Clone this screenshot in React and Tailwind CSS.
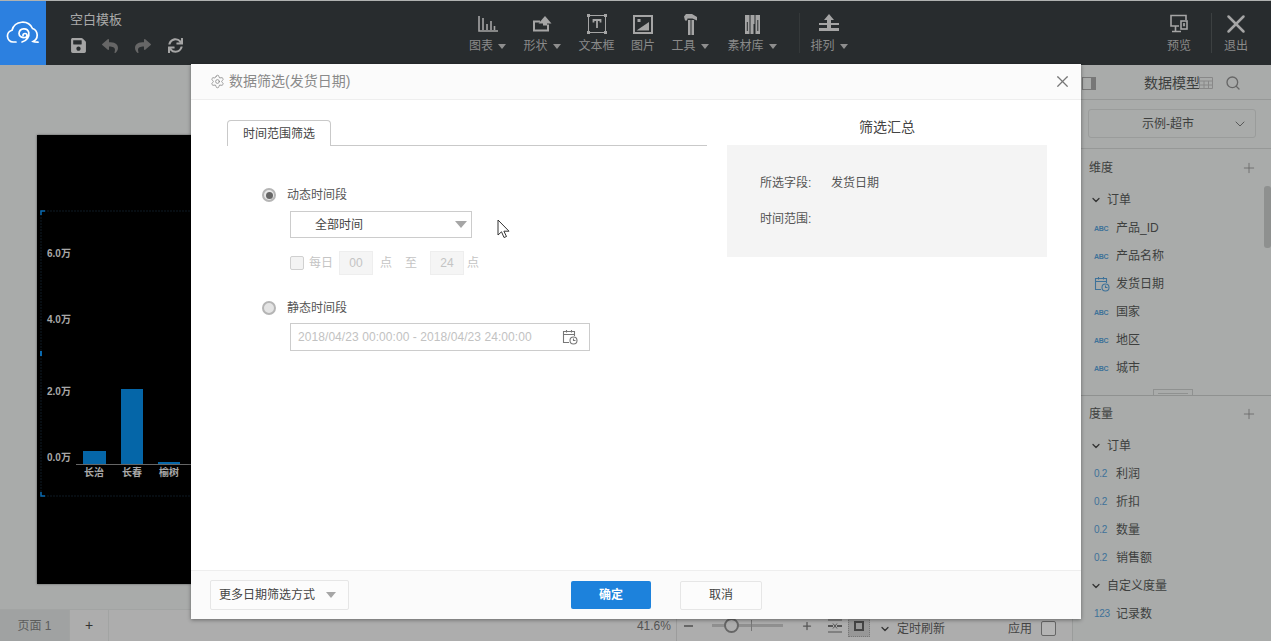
import React from "react";
import { FaSave, FaReply, FaShare, FaSync } from "react-icons/fa";
import { ChevronDown, Plus, Search, Settings, X } from "lucide-react";

const Caret = ({ className = "border-t-[#8e8e8e]" }) => (
  <span className={`inline-block w-0 h-0 border-x-[4px] border-x-transparent border-t-[5px] ${className}`}></span>
);

const ChartIcon = () => (
  <svg width="20" height="16" viewBox="0 0 20 16" fill="none" stroke="#a5a5a5" strokeWidth="1.600">
    <path d="M1 0v15h19M5 2v12M9 8v6M13 5v9M16.500 10v4" />
  </svg>
);
const ShapeIcon = () => (
  <svg width="19" height="16" viewBox="0 0 19 16" fill="none">
    <path d="M7 5.500H1v9h14v-6" stroke="#a5a5a5" strokeWidth="2" />
    <path d="M12 0l6.500 7.500h-13z" fill="#a5a5a5" />
    <rect x="10" y="7" width="4" height="2.500" fill="#a5a5a5" />
  </svg>
);
const TextBoxIcon = () => (
  <svg width="20" height="20" viewBox="0 0 20 20" fill="none">
    <rect x="1.500" y="1.500" width="17" height="17" stroke="#a5a5a5" strokeWidth="1" />
    <path d="M0 0h3v3H0zM17 0h3v3h-3zM0 17h3v3H0zM17 17h3v3h-3z" fill="#a5a5a5" />
    <path d="M6.500 8.500V6h7v2.500M10 6v8" stroke="#a5a5a5" strokeWidth="1.800" />
  </svg>
);
const PictureIcon = () => (
  <svg width="20" height="19" viewBox="0 0 20 19" fill="none">
    <rect x="1" y="1" width="18" height="17" stroke="#a5a5a5" strokeWidth="2" />
    <path d="M3.500 15.500L16 7v8.500z" fill="#a5a5a5" />
    <rect x="4.500" y="4" width="3" height="3" fill="#a5a5a5" />
  </svg>
);
const HammerIcon = () => (
  <svg width="13" height="21" viewBox="0 0 13 21" fill="#a5a5a5">
    <path d="M0 2.500L2 0h6l5 3v3.500L8.500 4.500H3.500L3 6.500H1z" />
    <path d="M4 6h2.500v15H4zM7.500 6H10v15H7.500z" />
  </svg>
);
const LibraryIcon = () => (
  <svg width="15" height="19" viewBox="0 0 15 19" fill="#a5a5a5">
    <path d="M0 0h4.500v19H0zM5.500 0h4v9H8.500v10h-3zM10.500 0H15v19h-4.500z" />
    <path d="M1.800 7h1v9h-1zM12.300 5h1v11h-1z" fill="#282c2e" />
  </svg>
);
const SortIcon = () => (
  <svg width="22" height="20" viewBox="0 0 22 20" fill="#a5a5a5">
    <path d="M11 0l5 6h-3v3h8v2h-8v3h8v3H1v-3h8v-3H1V9h8V6H6z" />
  </svg>
);
const PreviewIcon = () => (
  <svg width="20" height="20" viewBox="0 0 20 20" fill="none" stroke="#a5a5a5" strokeWidth="1.600">
    <path d="M10 12H2V1.500h15V6M6.500 12v5M3 17.500h9" />
    <rect x="12" y="7" width="6" height="8" />
    <rect x="14.200" y="9.500" width="1.600" height="2.500" fill="#a5a5a5" strokeWidth="0.500" />
  </svg>
);
const CloudLogo = () => (
  <svg width="34" height="24" viewBox="0 0 34 24" fill="none" stroke="#fff" strokeWidth="1.700" strokeLinecap="round">
    <path d="M10 21H7a6 6 0 0 1-1-11.800A11 11 0 0 1 26.500 7.500 7 7 0 0 1 27 20.500c1 .6 2 .7 5 .7" />
    <path d="M17 14.500a2 2 0 1 1 2 2c-3 .5-6-1-6-4a5 5 0 0 1 9.800-1c.8 4-1.800 8-6.800 9.500" />
  </svg>
);
const CalendarClock = ({ color = "#777" }) => (
  <svg width="16" height="16" viewBox="0 0 16 16" fill="none" stroke={color} strokeWidth="1.100">
    <path d="M7 13.500H1.500v-11h11V7M1.500 5.500h11M4.500 1v2.500M9.500 1v2.500" />
    <circle cx="11.500" cy="11.500" r="3.500" fill="none" />
    <path d="M11.500 9.500v2h2" />
  </svg>
);
const Cursor = () => (
  <svg width="14" height="20" viewBox="0 0 14 20" fill="#fff" stroke="#333" strokeWidth="1">
    <path d="M1 1v15l3.500-3.200L7 18.500l2.500-1-2.600-5.300H12z" />
  </svg>
);

const ToolItem = ({ width, icon, label, caret }) => (
  <div className={`flex flex-col items-center ${width}`}>
    <div className="h-[26px] flex items-center justify-center mt-[10px]">{icon}</div>
    <div className="flex items-center gap-[5px] h-[18px] text-[12px] text-[#8a8a8a] leading-none">
      {label}
      {caret && <Caret />}
    </div>
  </div>
);

const FieldRow = ({ type, label }) => (
  <div className="flex items-center h-[28px] pl-[21px]">
    <span className="w-[22px] flex items-center">
      {type === "date" && <CalendarClock color="#3e7299" />}
      {type === "ABC" && <span className="text-[7px] font-bold tracking-[-0.3px] text-[#3e7299] leading-none">ABC</span>}
      {type !== "date" && type !== "ABC" && <span className="text-[10px] tracking-[-0.3px] text-[#3e7299] leading-none">{type}</span>}
    </span>
    <span className="text-[12px] text-[#3d3f3e] leading-none">{label}</span>
  </div>
);

const GroupRow = ({ label }) => (
  <div className="flex items-center h-[28px] pl-[17px] gap-[5px] text-[12px] text-[#3d3f3e] leading-none">
    <ChevronDown size={12} strokeWidth={2.500} color="#333" />
    {label}
  </div>
);

const SectionHeader = ({ label, height }) => (
  <div className={`flex items-center justify-between pl-[16px] pr-[14px] text-[12px] text-[#3d3f3e] ${height}`}>
    {label}
    <Plus size={16} strokeWidth={1.200} color="#666" />
  </div>
);

const CanvasChart = () => (
  <svg width="900" height="449" viewBox="0 0 900 449" className="block">
    <path d="M4 76H900M4 361H900M4 76V361" stroke="#0f1a24" strokeWidth="1" strokeDasharray="2 1" />
    <path d="M4 80V76H8M4 357V361H8" stroke="#0a6ab0" strokeWidth="1.500" fill="none" />
    <rect x="3" y="216" width="2" height="5" fill="#0a6ab0" />
    <g fill="#a8a8a8" fontSize="10" fontWeight="700">
      <text x="10" y="122">6.0万</text>
      <text x="10" y="188">4.0万</text>
      <text x="10" y="260">2.0万</text>
      <text x="10" y="326">0.0万</text>
    </g>
    <rect x="46" y="316" width="23" height="13" fill="#0566a8" />
    <rect x="84" y="254" width="22" height="75" fill="#0566a8" />
    <rect x="121" y="327" width="22" height="2" fill="#0566a8" />
    <path d="M39 329.500H160" stroke="#666" strokeWidth="1" />
    <g fill="#a8a8a8" fontSize="10" fontWeight="700" textAnchor="middle">
      <text x="57" y="341">长治</text>
      <text x="95" y="341">长春</text>
      <text x="132" y="341">榆树</text>
    </g>
  </svg>
);

export default function App() {
  return (
    <div className="relative w-[1271px] h-[641px] overflow-hidden flex flex-col bg-[#a9abaa] font-['Liberation_Sans','Noto_Sans_CJK_SC',sans-serif]">
      {/* top bar */}
      <header className="flex h-[65px] shrink-0 bg-[#282c2e] border-t border-[#b0b2b1]">
        <div className="w-[46px] bg-[#2c80e0] flex items-center justify-center">
          <CloudLogo />
        </div>
        <div className="w-[414px] pl-[24px] pt-[10px]">
          <div className="text-[13px] leading-[18px] text-[#a9a9a9]">空白模板</div>
          <div className="flex items-center mt-[8px]">
            <FaSave size={17} color="#a5a5a5" />
            <FaReply size={16} color="#666" className="ml-[15px]" />
            <FaShare size={16} color="#666" className="ml-[17px]" />
            <FaSync size={15} color="#a5a5a5" className="ml-[17px]" />
          </div>
        </div>
        <ToolItem width="w-[55px]" icon={<ChartIcon />} label="图表" caret />
        <ToolItem width="w-[54px]" icon={<ShapeIcon />} label="形状" caret />
        <ToolItem width="w-[55px]" icon={<TextBoxIcon />} label="文本框" />
        <ToolItem width="w-[38px]" icon={<PictureIcon />} label="图片" />
        <ToolItem width="w-[56px]" icon={<HammerIcon />} label="工具" caret />
        <ToolItem width="w-[68px]" icon={<LibraryIcon />} label="素材库" caret />
        <div className="w-px h-[40px] mt-[12px] ml-[13px] bg-[#343839]"></div>
        <div className="ml-[3px]">
          <ToolItem width="w-[52px]" icon={<SortIcon />} label="排列" caret />
        </div>
        <div className="ml-auto flex pr-[15px]">
          <ToolItem width="w-[40px]" icon={<PreviewIcon />} label="预览" />
          <div className="w-px h-[40px] mt-[12px] ml-[12px] mr-[4px] bg-[#3c4041]"></div>
          <ToolItem width="w-[40px]" icon={<X size={30} strokeWidth={2} color="#a5a5a5" />} label="退出" />
        </div>
      </header>

      <div className="flex flex-1 min-h-0">
        {/* canvas */}
        <main className="w-[1072px] flex flex-col">
          <div className="flex-1 min-h-0 overflow-hidden pl-[37px] pt-[70px]">
            <div className="w-[900px] h-[449px] bg-black shadow-[0_0_2px_#555]">
              <CanvasChart />
            </div>
          </div>
          <footer className="h-[32px] shrink-0 flex items-center bg-[#adadad] border-t border-[#a2a4a3] text-[12px] text-[#555]">
            <div className="w-[69px] h-full flex items-center justify-center bg-[#a0a2a2] text-[#5c5c5c]">页面 1</div>
            <div className="w-[40px] h-full flex items-center justify-center border-x border-[#a2a4a3] text-[14px] text-[#333]">+</div>
            <div className="ml-auto flex items-center h-full pr-[16px]">
              <span className="text-[#555]">41.6%</span>
              <div className="w-px h-full bg-[#9c9c9c] ml-[5px]"></div>
              <div className="w-[9px] h-[2px] bg-[#666] ml-[7px]"></div>
              <div className="relative w-[71px] h-[3px] bg-[#8f8f8f] ml-[19px]">
                <span className="absolute left-[12px] top-[-6px] w-[15px] h-[15px] rounded-full border-2 border-[#666] bg-[#adadad]"></span>
                <span className="absolute left-[39px] top-[-4px] w-px h-[11px] bg-[#777]"></span>
              </div>
              <Plus size={12} strokeWidth={2.500} color="#555" className="ml-[18px]" />
              <svg width="14" height="14" viewBox="0 0 14 14" fill="none" stroke="#555" strokeWidth="1.200" className="ml-[15px]">
                <path d="M0 1h14M0 13h14" />
                <path d="M0 7h5M9 7h5" strokeWidth="2" />
                <path d="M5 4.500L7 7 5 9.500M9 4.500L7 7l2 2.500" strokeWidth="1" />
              </svg>
              <div className="w-[22px] h-[22px] ml-[6px] bg-[#979797] border border-dotted border-[#777] flex items-center justify-center">
                <div className="w-[10px] h-[10px] border-2 border-[#444]"></div>
              </div>
              <ChevronDown size={12} strokeWidth={2.500} color="#333" className="ml-[9px] mt-[6px]" />
              <span className="ml-[6px] mt-[6px] text-[#444]">定时刷新</span>
              <span className="ml-[63px] mt-[6px] text-[#444]">应用</span>
              <div className="w-[15px] h-[15px] ml-[9px] mt-[6px] rounded-[2px] border border-[#666] bg-[#b4b4b4]"></div>
            </div>
          </footer>
        </main>

        {/* data model panel */}
        <aside className="relative flex-1 min-w-0 border-l border-[#9a9c9b]">
          <div className="flex items-center h-[35px] border-b border-[#969897] pl-[9px] pt-[2px]">
            <div className="w-[14px] h-[13px] border border-[#777] flex justify-end">
              <span className="w-[4px] h-full bg-[#777]"></span>
            </div>
            <span className="ml-[48px] text-[14px] text-[#3d3f3e] leading-none">数据模型</span>
            <svg width="14" height="12" viewBox="0 0 14 12" fill="none" stroke="#888" strokeWidth="1" className="ml-[-1px]">
              <path d="M.5.500h13v11H.5zM.5 4h13M.5 8h13M5 4v7.500M9.500 4v7.500" />
            </svg>
            <Search size={16} strokeWidth={2} color="#666" className="ml-[12px]" />
          </div>
          <div className="h-[49px] border-b border-[#969897] pl-[15px] pr-[15px] pt-[9px]">
            <div className="h-[29px] flex items-center rounded-[3px] border border-[#9a9c9b] relative justify-center pr-[8px] text-[12px] text-[#3d3f3e]">
              示例-超市
              <ChevronDown size={16} strokeWidth={1.200} color="#444" className="absolute right-[7px]" />
            </div>
          </div>
          <SectionHeader label="维度" height="h-[37px]" />
          <GroupRow label="订单" />
          <FieldRow type="ABC" label="产品_ID" />
          <FieldRow type="ABC" label="产品名称" />
          <FieldRow type="date" label="发货日期" />
          <FieldRow type="ABC" label="国家" />
          <FieldRow type="ABC" label="地区" />
          <FieldRow type="ABC" label="城市" />
          <div className="h-[14px] border-b border-[#8f9190] flex items-end pl-[80px]">
            <div className="w-[40px] h-[6px] border border-b-0 border-[#8f9190] flex items-end justify-center pb-[1px]">
              <span className="w-[30px] h-px bg-[#8f9190]"></span>
            </div>
          </div>
          <SectionHeader label="度量" height="h-[36px]" />
          <GroupRow label="订单" />
          <FieldRow type="0.2" label="利润" />
          <FieldRow type="0.2" label="折扣" />
          <FieldRow type="0.2" label="数量" />
          <FieldRow type="0.2" label="销售额" />
          <GroupRow label="自定义度量" />
          <FieldRow type="123" label="记录数" />
          <div className="absolute right-0 top-[121px] w-[7px] h-[62px] rounded-[3px] bg-[#8e908f]"></div>
        </aside>
      </div>

      {/* filter dialog */}
      <div className="absolute left-[191px] top-[64px] w-[890px] h-[555px] flex flex-col bg-white shadow-[0_1px_4px_rgba(0,0,0,0.4)]">
        <div className="h-[36px] shrink-0 flex items-center pl-[19px] pr-[9px] bg-[#fbfbfb] border-b border-[#eeeeee] text-[14px] text-[#8a8a8a]">
          <Settings size={15} strokeWidth={1.300} color="#888" />
          <span className="ml-[4px]">数据筛选(发货日期)</span>
          <X size={19} strokeWidth={1.500} color="#777" className="ml-auto" />
        </div>

        <div className="flex-1 min-h-0 flex pl-[36px]">
          <div className="w-[480px] pt-[20px]">
            <div className="h-[26px] border-b border-[#c9c9c9]">
              <div className="w-[104px] h-[26px] flex items-center justify-center rounded-t-[4px] border border-b-0 border-[#c9c9c9] bg-white text-[12px] text-[#444]">
                时间范围筛选
              </div>
            </div>
            <div className="pl-[35px] pt-[42px]">
              <div className="flex items-center gap-[11px] h-[14px] text-[12px] text-[#555]">
                <span className="w-[14px] h-[14px] rounded-full border-2 border-[#b5b5b5] bg-[#e8e8e8] flex items-center justify-center">
                  <span className="w-[7px] h-[7px] rounded-full bg-[#666]"></span>
                </span>
                动态时间段
              </div>
              <div className="relative ml-[28px] mt-[9px] w-[182px] h-[27px] flex items-center pl-[24px] border border-[#cccccc] text-[12px] text-[#444]">
                全部时间
                <span className="absolute right-[4px] w-0 h-0 border-x-[6px] border-x-transparent border-t-[7px] border-t-[#a6a6a6]"></span>
              </div>
              <div className="flex items-center ml-[28px] mt-[13px] h-[24px] text-[12px] text-[#c4c4c4]">
                <span className="w-[14px] h-[14px] rounded-[2px] border border-[#d0d0d0] bg-[#f3f3f3]"></span>
                <span className="ml-[5px]">每日</span>
                <span className="ml-[6px] w-[34px] h-[24px] flex items-center justify-center bg-[#f5f5f5] border border-[#eeeeee]">00</span>
                <span className="ml-[7px]">点</span>
                <span className="ml-[13px]">至</span>
                <span className="ml-[13px] w-[34px] h-[24px] flex items-center justify-center bg-[#f5f5f5] border border-[#eeeeee]">24</span>
                <span className="ml-[3px]">点</span>
              </div>
              <div className="flex items-center gap-[11px] mt-[26px] h-[14px] text-[12px] text-[#555]">
                <span className="w-[14px] h-[14px] rounded-full border-2 border-[#b5b5b5] bg-[#e4e4e4]"></span>
                静态时间段
              </div>
              <div className="ml-[28px] mt-[8px] w-[300px] h-[28px] flex items-center justify-between pl-[7px] pr-[11px] border border-[#cccccc] text-[12px] tracking-[0.07px] text-[#c2c2c2]">
                2018/04/23 00:00:00 - 2018/04/23 24:00:00
                <CalendarClock />
              </div>
            </div>
          </div>
          <div className="w-[320px] ml-[20px]">
            <div className="h-[45px] pt-[18px] text-center text-[14px] leading-[18px] text-[#444]">筛选汇总</div>
            <div className="h-[112px] bg-[#f4f4f4] pl-[33px] pt-[30px] text-[12px] leading-[16px] text-[#555]">
              <div className="flex">
                <span className="w-[71px]">所选字段:</span>
                <span>发货日期</span>
              </div>
              <div className="mt-[20px]">时间范围:</div>
            </div>
          </div>
        </div>

        <div className="h-[49px] shrink-0 flex items-center bg-[#fbfbfb] border-t border-[#eeeeee] pl-[19px] text-[12px]">
          <div className="w-[139px] h-[30px] flex items-center gap-[11px] pl-[8px] rounded-[2px] border border-[#e6e6e6] text-[#444] bg-[#fcfcfc]">
            更多日期筛选方式
            <span className="w-0 h-0 border-x-[5px] border-x-transparent border-t-[6px] border-t-[#a6a6a6]"></span>
          </div>
          <button className="ml-[222px] w-[80px] h-[28px] rounded-[2px] bg-[#1d82dc] text-white font-bold">确定</button>
          <button className="ml-[29px] w-[82px] h-[29px] rounded-[2px] border border-[#e6e6e6] bg-[#fcfcfc] text-[#444]">取消</button>
        </div>

        <div className="absolute left-[306px] top-[155px]">
          <Cursor />
        </div>
      </div>
    </div>
  );
}
